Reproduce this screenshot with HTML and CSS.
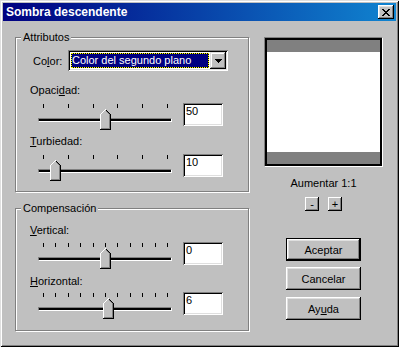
FILE: index.html
```html
<!DOCTYPE html>
<html lang="es">
<head>
    <meta charset="UTF-8">
    <meta name="viewport" content="width=device-width, initial-scale=1.0">
    <title>Sombra descendente</title>
    <link rel="stylesheet" href="styles.css">
</head>
<body>
    <div class="window">
        <div class="titlebar">
            <span class="title">Sombra descendente</span>
            <button class="close">
                <svg width="8" height="7" viewBox="0 0 8 7" shape-rendering="crispEdges">
                    <path fill="#000" d="M0 0h2v1H0z M6 0h2v1H6z M1 1h2v1H1z M5 1h2v1H5z M2 2h4v1H2z M3 3h2v1H3z M2 4h4v1H2z M1 5h2v1H1z M5 5h2v1H5z M0 6h2v1H0z M6 6h2v1H6z"/>
                </svg>
            </button>
        </div>

        <div class="body">
            <div class="left">
                <!-- grupo atributos -->
                <div class="group group-top">
                    <div class="legend">Attributos</div>
                    <div class="color-row">
                        <span class="color-label">Co<u>l</u>or:</span>
                        <div class="combo">
                            <div class="combo-sel">Color del segundo plano</div>
                            <div class="combo-btn">
                                <svg width="7" height="4" viewBox="0 0 7 4" shape-rendering="crispEdges">
                                    <path fill="#000" d="M0 0h7v1H0z M1 1h5v1H1z M2 2h3v1H2z M3 3h1v1H3z"/>
                                </svg>
                            </div>
                        </div>
                    </div>

                    <div class="field-label lbl-opacity">Opaci<u>d</u>ad:</div>
                    <div class="slider-row row-opacity">
                        <div class="slider">
                            <div class="ticks"><i></i><i></i><i></i><i></i><i></i><i></i></div>
                            <div class="track"></div>
                            <svg class="thumb" style="left:62px" width="11" height="21" viewBox="0 0 11 21" shape-rendering="crispEdges">
                                <path fill="#c0c0c0" d="M5 1h1v1H5z M4 2h2v1H4z M3 3h4v1H3z M2 4h6v1H2z M1 5h8v14H1z"/>
                                <path fill="#fff" d="M5 0h1v1H5z M4 1h1v1H4z M3 2h1v1H3z M2 3h1v1H2z M1 4h1v1H1z M0 5h1v15H0z"/>
                                <path fill="#808080" d="M6 2h1v1H6z M7 3h1v1H7z M8 4h1v1H8z M9 5h1v15H9z M1 19h8v1H1z"/>
                                <path fill="#000" d="M6 1h1v1H6z M7 2h1v1H7z M8 3h1v1H8z M9 4h1v1H9z M10 5h1v16h-1z M0 20h10v1H0z"/>
                            </svg>
                        </div>
                        <div class="edit">50</div>
                    </div>

                    <div class="field-label lbl-turb"><u>T</u>urbiedad:</div>
                    <div class="slider-row row-turb">
                        <div class="slider">
                            <div class="ticks"><i></i><i></i><i></i><i></i><i></i><i></i></div>
                            <div class="track"></div>
                            <svg class="thumb" style="left:12px" width="11" height="21" viewBox="0 0 11 21" shape-rendering="crispEdges">
                                <path fill="#c0c0c0" d="M5 1h1v1H5z M4 2h2v1H4z M3 3h4v1H3z M2 4h6v1H2z M1 5h8v14H1z"/>
                                <path fill="#fff" d="M5 0h1v1H5z M4 1h1v1H4z M3 2h1v1H3z M2 3h1v1H2z M1 4h1v1H1z M0 5h1v15H0z"/>
                                <path fill="#808080" d="M6 2h1v1H6z M7 3h1v1H7z M8 4h1v1H8z M9 5h1v15H9z M1 19h8v1H1z"/>
                                <path fill="#000" d="M6 1h1v1H6z M7 2h1v1H7z M8 3h1v1H8z M9 4h1v1H9z M10 5h1v16h-1z M0 20h10v1H0z"/>
                            </svg>
                        </div>
                        <div class="edit">10</div>
                    </div>
                </div>

                <!-- grupo compensacion -->
                <div class="group group-bottom">
                    <div class="legend">Compensación</div>

                    <div class="field-label lbl-vert"><u>V</u>ertical:</div>
                    <div class="slider-row row-vert">
                        <div class="slider">
                            <div class="ticks"><i></i><i></i><i></i><i></i><i></i><i></i><i></i><i></i><i></i><i></i><i></i></div>
                            <div class="track"></div>
                            <svg class="thumb" style="left:62px" width="11" height="21" viewBox="0 0 11 21" shape-rendering="crispEdges">
                                <path fill="#c0c0c0" d="M5 1h1v1H5z M4 2h2v1H4z M3 3h4v1H3z M2 4h6v1H2z M1 5h8v14H1z"/>
                                <path fill="#fff" d="M5 0h1v1H5z M4 1h1v1H4z M3 2h1v1H3z M2 3h1v1H2z M1 4h1v1H1z M0 5h1v15H0z"/>
                                <path fill="#808080" d="M6 2h1v1H6z M7 3h1v1H7z M8 4h1v1H8z M9 5h1v15H9z M1 19h8v1H1z"/>
                                <path fill="#000" d="M6 1h1v1H6z M7 2h1v1H7z M8 3h1v1H8z M9 4h1v1H9z M10 5h1v16h-1z M0 20h10v1H0z"/>
                            </svg>
                        </div>
                        <div class="edit">0</div>
                    </div>

                    <div class="field-label lbl-horz"><u>H</u>orizontal:</div>
                    <div class="slider-row row-horz">
                        <div class="slider">
                            <div class="ticks"><i></i><i></i><i></i><i></i><i></i><i></i><i></i><i></i><i></i><i></i><i></i></div>
                            <div class="track"></div>
                            <svg class="thumb" style="left:65px" width="11" height="21" viewBox="0 0 11 21" shape-rendering="crispEdges">
                                <path fill="#c0c0c0" d="M5 1h1v1H5z M4 2h2v1H4z M3 3h4v1H3z M2 4h6v1H2z M1 5h8v14H1z"/>
                                <path fill="#fff" d="M5 0h1v1H5z M4 1h1v1H4z M3 2h1v1H3z M2 3h1v1H2z M1 4h1v1H1z M0 5h1v15H0z"/>
                                <path fill="#808080" d="M6 2h1v1H6z M7 3h1v1H7z M8 4h1v1H8z M9 5h1v15H9z M1 19h8v1H1z"/>
                                <path fill="#000" d="M6 1h1v1H6z M7 2h1v1H7z M8 3h1v1H8z M9 4h1v1H9z M10 5h1v16h-1z M0 20h10v1H0z"/>
                            </svg>
                        </div>
                        <div class="edit">6</div>
                    </div>
                </div>
            </div>

            <div class="right">
                <div class="preview">
                    <div class="preview-in">
                        <div class="band"></div>
                        <div class="canvas"></div>
                        <div class="band"></div>
                    </div>
                </div>
                <div class="zoom-label">Aumentar 1:1</div>
                <div class="zoom-btns">
                    <button class="sbtn">-</button>
                    <button class="sbtn">+</button>
                </div>
                <button class="btn btn-default btn-first">Aceptar</button>
                <button class="btn btn-second">Cancelar</button>
                <button class="btn btn-third">Ay<u>u</u>da</button>
            </div>
        </div>
    </div>
</body>
</html>
```

FILE: styles.css
```css
body{
    margin: 0;
    background: #c0c0c0;
    font-family: "Liberation Sans", Arial, sans-serif;
    font-size: 11px;
    color: #000;
}

.window{
    width: 399px;
    height: 347px;
    box-sizing: border-box;
    padding: 3px;
    background: #c0c0c0;
    box-shadow: inset 1px 1px #dfdfdf, inset -1px -1px #000, inset 2px 2px #fff, inset -2px -2px #808080;
}

/* barra de titulo */
.titlebar{
    height: 18px;
    display: flex;
    align-items: center;
    justify-content: space-between;
    padding: 0 2px 0 3px;
    background: linear-gradient(to right, #000080, #1084d0);
}
.title{
    color: #fff;
    font-weight: bold;
    font-size: 12px;
}
.close{
    width: 16px;
    height: 14px;
    padding: 0;
    border: 0;
    background: #c0c0c0;
    display: flex;
    align-items: center;
    justify-content: center;
    box-shadow: inset -1px -1px #000, inset 1px 1px #fff, inset -2px -2px #808080, inset 2px 2px #dfdfdf;
}

.body{
    display: flex;
    align-items: flex-start;
    padding: 16px 0 0 12px;
}

.left{
    width: 234px;
}

/* marco grabado */
.group{
    border: 1px solid #808080;
    box-shadow: inset 1px 1px #fff, 1px 1px #fff;
}
.group-top{
    padding-bottom: 9px;
}
.group-bottom{
    margin-top: 16px;
    padding-bottom: 10px;
}
.legend{
    width: max-content;
    margin: -7px 0 0 5px;
    padding: 0 2px;
    background: #c0c0c0;
    line-height: 13px;
}

.color-row{
    display: flex;
    align-items: center;
    margin: 6px 0 0 17px;
}
.color-label{
    width: 35px;
}
.combo{
    width: 160px;
    height: 21px;
    box-sizing: border-box;
    padding: 2px;
    display: flex;
    background: #fff;
    box-shadow: inset 1px 1px #808080, inset -1px -1px #fff, inset 2px 2px #000, inset -2px -2px #dfdfdf;
}
.combo-sel{
    flex: 1;
    margin: 1px 1px 1px 1px;
    line-height: 13px;
    color: #fff;
    border: 1px dotted #ffff00;
    background: linear-gradient(#000080, #000080) padding-box, linear-gradient(#000, #000) border-box;
}
.combo-btn{
    width: 16px;
    height: 17px;
    display: flex;
    align-items: center;
    justify-content: center;
    background: #c0c0c0;
    box-shadow: inset -1px -1px #000, inset 1px 1px #dfdfdf, inset -2px -2px #808080, inset 2px 2px #fff;
}

.field-label{
    margin-left: 14px;
    line-height: 13px;
}
.lbl-opacity{ margin-top: 13px; }
.lbl-turb{ margin-top: 4px; }
.lbl-vert{ margin-top: 9px; }
.lbl-horz{ margin-top: 5px; }

.slider-row{
    display: flex;
    align-items: flex-start;
    gap: 11px;
    margin-left: 22px;
}
.row-opacity,
.row-turb{ margin-top: 6px; }
.row-vert{ margin-top: 5px; }
.row-horz{ margin-top: 4px; }

.slider{
    position: relative;
    width: 134px;
    height: 28px;
}
.ticks{
    display: flex;
    justify-content: space-between;
    width: 125px;
    height: 4px;
    margin: 1px 0 0 5px;
}
.ticks i{
    width: 1px;
    background: #000;
}
.track{
    height: 2px;
    margin-top: 10px;
    background: #000;
    border: 1px solid;
    border-color: #808080 #fff #fff #808080;
}
/* el cursor va encima de la pista */
.thumb{
    position: absolute;
    top: 6px;
}

.edit{
    width: 40px;
    height: 23px;
    box-sizing: border-box;
    padding: 2px 0 0 3px;
    line-height: 13px;
    background: #fff;
    box-shadow: inset 1px 1px #808080, inset -1px -1px #fff, inset 2px 2px #000, inset -2px -2px #dfdfdf;
}

/* columna derecha */
.right{
    width: 119px;
    margin-left: 15px;
    display: flex;
    flex-direction: column;
    align-items: center;
}
.preview{
    width: 119px;
    box-sizing: border-box;
    border: 1px solid;
    border-color: #808080 #fff #fff #808080;
}
.preview-in{
    border: 2px solid #000;
}
.band{
    height: 12px;
    background: #808080;
}
.canvas{
    height: 100px;
    background: #fff;
}
.zoom-label{
    margin-top: 10px;
    line-height: 13px;
}
.zoom-btns{
    display: flex;
    gap: 9px;
    margin-top: 7px;
}
.sbtn{
    width: 14px;
    height: 14px;
    padding: 0;
    border: 0;
    font: inherit;
    line-height: 12px;
    background: #c0c0c0;
    box-shadow: inset -1px -1px #000, inset 1px 1px #fff, inset -2px -2px #808080;
}

.btn{
    width: 75px;
    height: 23px;
    padding: 0;
    border: 0;
    font: inherit;
    color: #000;
    background: #c0c0c0;
    box-shadow: inset -1px -1px #000, inset 1px 1px #fff, inset -2px -2px #808080, inset 2px 2px #dfdfdf;
}
.btn-default{
    box-shadow: inset 0 0 0 1px #000, inset -2px -2px #000, inset 2px 2px #fff, inset -3px -3px #808080, inset 3px 3px #dfdfdf;
}
.btn-first{ margin-top: 27px; }
.btn-second{ margin-top: 6px; }
.btn-third{ margin-top: 7px; }
```
